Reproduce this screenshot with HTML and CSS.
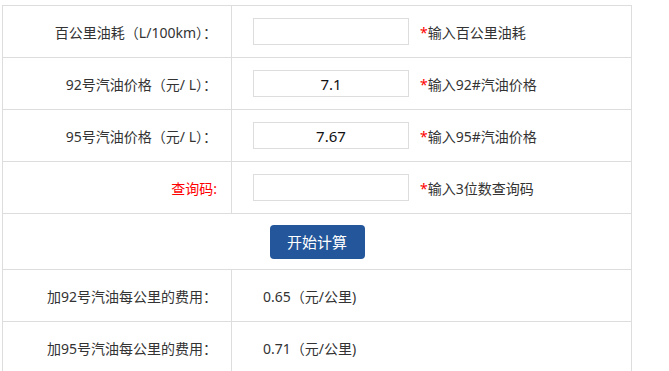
FILE: index.html
```html
<!DOCTYPE html>
<html lang="zh-CN">
<head>
<meta charset="utf-8">
<title>油费计算</title>
<link rel="stylesheet" href="styles.css">
</head>
<body>
<div class="wrap">
<table class="calc">
  <tr>
    <td class="label">百公里油耗（L/100km）：</td>
    <td class="field"><input class="box" type="text" value=""><span class="hint"><span class="star">*</span>输入百公里油耗</span></td>
  </tr>
  <tr>
    <td class="label">92号汽油价格（元/ L）：</td>
    <td class="field"><input class="box" type="text" value="7.1"><span class="hint"><span class="star">*</span>输入92#汽油价格</span></td>
  </tr>
  <tr>
    <td class="label">95号汽油价格（元/ L）：</td>
    <td class="field"><input class="box" type="text" value="7.67"><span class="hint"><span class="star">*</span>输入95#汽油价格</span></td>
  </tr>
  <tr>
    <td class="label red">查询码:</td>
    <td class="field"><input class="box" type="text" value=""><span class="hint"><span class="star">*</span>输入3位数查询码</span></td>
  </tr>
  <tr class="btnrow">
    <td colspan="2"><button class="btn" type="button">开始计算</button></td>
  </tr>
  <tr>
    <td class="label">加92号汽油每公里的费用：</td>
    <td class="value">0.65（元/公里)</td>
  </tr>
  <tr>
    <td class="label">加95号汽油每公里的费用：</td>
    <td class="value">0.71（元/公里)</td>
  </tr>
</table>
</div>
</body>
</html>
```
FILE: styles.css
```css
html, body {
  margin: 0;
  padding: 0;
  background: #fff;
}
body {
  font-family: "Noto Sans", "Noto Sans CJK SC", sans-serif;
  font-size: 14px;
  color: #333;
}
.wrap {
  padding: 5px 0 0 2px;
}
.calc {
  width: 630px;
  border-collapse: collapse;
  table-layout: fixed;
}
.calc td {
  border: 1px solid #ddd;
  height: 51px;
  padding: 0;
  vertical-align: middle;
}
.calc td.label {
  width: 229px;
  text-align: right;
  padding-right: 14px;
  box-sizing: border-box;
}
.calc td.label.red {
  color: #f00;
}
.field {
  padding-left: 21px !important;
  white-space: nowrap;
}
.box {
  box-sizing: border-box;
  width: 156px;
  height: 27px;
  border: 1px solid #ddd;
  padding: 0 4px;
  margin: 0;
  text-align: center;
  font-family: "Noto Sans", "Noto Sans CJK SC", sans-serif;
  font-size: 15px;
  color: #111;
  vertical-align: middle;
  outline: none;
}
.hint {
  margin-left: 11px;
  vertical-align: middle;
}
.star {
  color: #f00;
}
.value {
  padding-left: 31px !important;
}
.btnrow td {
  height: 55px;
  text-align: center;
}
.btn {
  width: 95px;
  height: 34px;
  border: none;
  border-radius: 4px;
  background: #23569a;
  color: #fff;
  font-family: "Noto Sans", "Noto Sans CJK SC", sans-serif;
  font-size: 15px;
  cursor: pointer;
  padding: 0;
}
```
